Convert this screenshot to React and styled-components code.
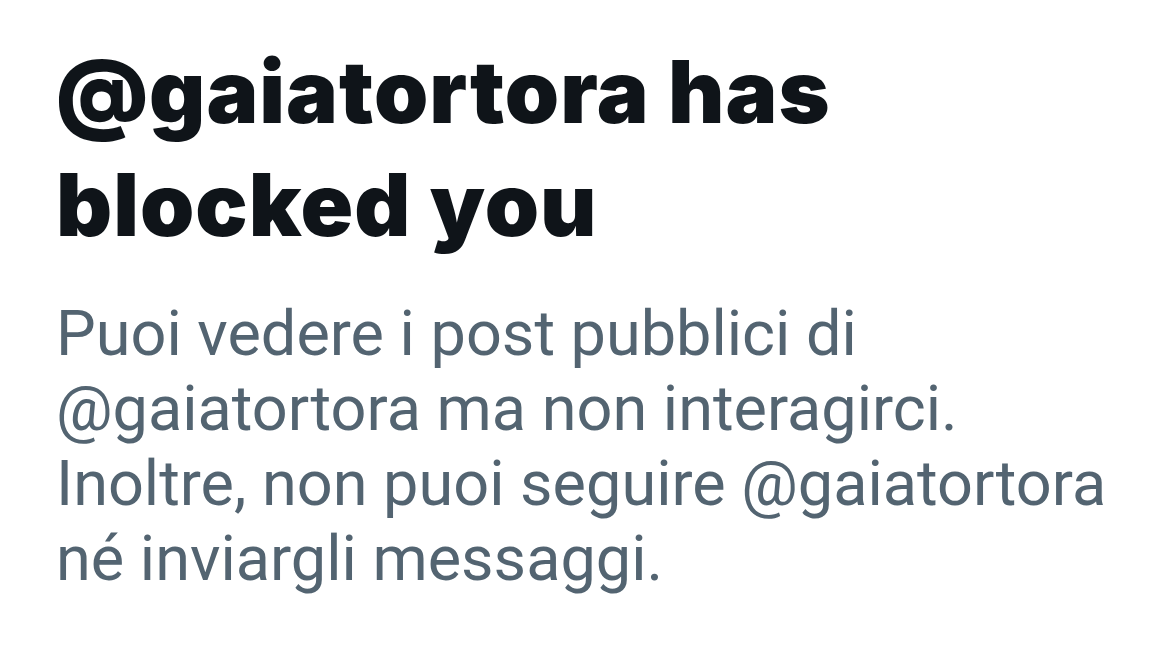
import React from "react";
import styled, { createGlobalStyle } from "styled-components";

const Global = createGlobalStyle`
  html, body { margin: 0; padding: 0; background: #ffffff; }
  body { width: 1170px; height: 652px; overflow: hidden; }
`;

const Page = styled.main`
  box-sizing: border-box;
  width: 1170px;
  height: 652px;
  padding: 35px 40px 0 56px;
  display: flex;
  flex-direction: column;
  gap: 35px;
  background: #ffffff;
`;

const Title = styled.h1`
  margin: 0;
  font-family: Inter, "Liberation Sans", sans-serif;
  font-weight: 900;
  font-size: 87px;
  line-height: 113px;
  letter-spacing: 1px;
  color: #0f1419;
`;

const Body = styled.p`
  margin: 0;
  font-family: Roboto, "Liberation Sans", sans-serif;
  font-weight: 400;
  font-size: 63px;
  line-height: 75px;
  color: #536471;
`;

export default function App() {
  return (
    <>
      <Global />
      <Page>
        <Title>
          @gaiatortora has
          <br />
          blocked you
        </Title>
        <Body>
          Puoi vedere i post pubblici di
          <br />
          @gaiatortora ma non interagirci.
          <br />
          Inoltre, non puoi seguire @gaiatortora
          <br />
          né inviargli messaggi.
        </Body>
      </Page>
    </>
  );
}
